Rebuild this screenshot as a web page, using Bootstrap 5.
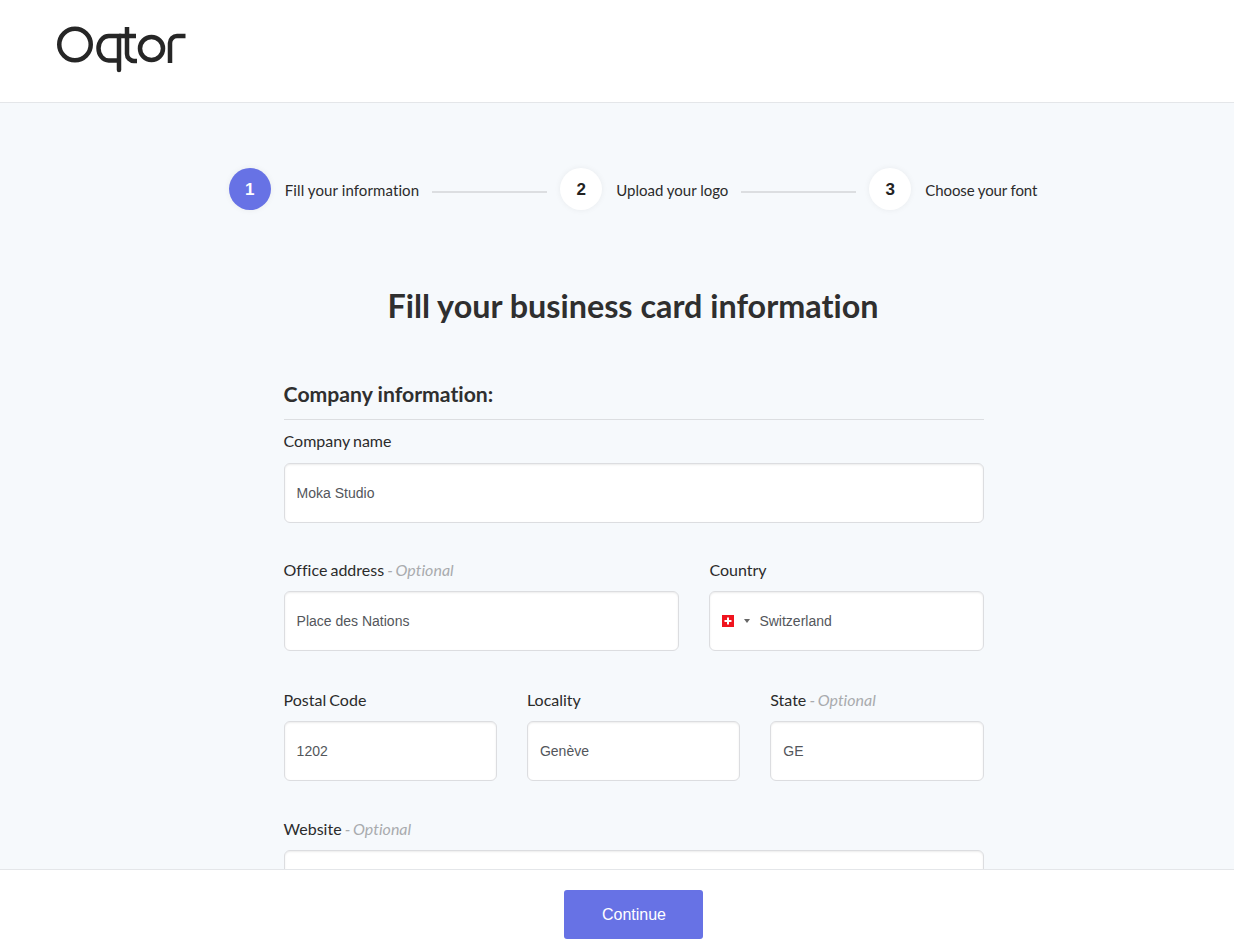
<!DOCTYPE html>
<html lang="en">
<head>
    <meta charset="UTF-8">
    <meta name="viewport" content="width=device-width, initial-scale=1.0">
    <title>Oqtor</title>
    <link href="https://cdn.jsdelivr.net/npm/bootstrap@5.3.3/dist/css/bootstrap.min.css" rel="stylesheet">
    <style>
        html, body { height: 100%; }
        body { font-family: "Lato", sans-serif; font-variant-ligatures: none; color: #2b2b2b; background: #f6f9fc; overflow: hidden; }
        .top-bar { height: 103px; padding-left: 56px; background: #fff; border-bottom: 1px solid #e4e6e9; flex: none; }
        .page-body { flex: 1; min-height: 0; overflow: hidden; padding: 65px 0 0 32px; }
        .bottom-bar { height: 81px; background: #fff; border-top: 1px solid #e4e6e9; flex: none; padding: 20px 0 0 32px; }

        .step-num { width: 42px; height: 42px; border-radius: 50%; background: #fff; font: 700 17px "Liberation Sans", sans-serif; color: #222; box-shadow: 0 0 6px rgba(0, 0, 0, .06); padding-top: 1px; }
        .step-num.is-active { background: #6772e5; color: #fff; }
        .step-text { font-size: 15px; margin-left: 14px; color: #2b2b2b; padding-top: 2px; }
        .step-text.step-first { letter-spacing: .1px; }
        .step-text.step-last { letter-spacing: -.12px; }
        .step-line { width: 115px; height: 2px; background: #dcdee1; margin: 6px 13px 0; }

        .main-title { font-size: 32.350px; font-weight: 700; color: #2f2f2f; margin: 73px 0 0; line-height: 46px; text-align: center; }
        .form-wrap { width: 700px; margin-left: 251.600px; padding-top: 50px; }
        .section-title { font-size: 21.200px; font-weight: 700; line-height: 30px; padding-bottom: 10px; margin: 0 0 10px; border-bottom: 1px solid #dcdee1; color: #2f2f2f; }
        .field-row { --bs-gutter-x: 30px; }
        .field-group { margin-bottom: 37px; }
        .field-group.gap-first { margin-bottom: 36px; }
        .field-group.gap-second { margin-bottom: 38px; }
        .field-label { font-size: 16px; line-height: 22px; margin-bottom: 10px; display: block; color: #2b2b2b; word-spacing: -1px; }
        .gap-first .field-label { margin-bottom: 11px; }
        .field-label em { color: #a9abae; }
        .field-input.form-control { height: 60px; padding: 0 12px; font: 14px "Liberation Sans", sans-serif; color: #53565b; border: 1px solid #dcdde0; border-radius: 6px; background: #fff; box-shadow: inset 0 1px 2px rgba(0, 0, 0, .08); }
        .country-box { height: 60px; padding: 0 12px; font: 14px "Liberation Sans", sans-serif; color: #53565b; border: 1px solid #dcdde0; border-radius: 6px; background: #fff; box-shadow: inset 0 1px 2px rgba(0, 0, 0, .08); }
        .caret-down { width: 0; height: 0; border-left: 3.500px solid transparent; border-right: 3.500px solid transparent; border-top: 4px solid #666; margin: 0 9px 0 10px; }
        .continue-btn.btn { width: 139px; height: 49px; padding: 0 0 0 2px; background: #6772e5; border: 0; border-radius: 3px; color: #fff; font: 16px "Liberation Sans", sans-serif; }
    </style>
</head>
<body class="d-flex flex-column">
    <header class="top-bar d-flex align-items-center">
        <svg width="132" height="52" viewBox="0 0 132 52" fill="none" stroke="#262626" stroke-width="4.500" aria-label="Oqtor">
            <!-- O -->
            <circle cx="19" cy="19.500" r="15.750"/>
            <!-- q, its top line runs on into the t -->
            <path d="M63 45 V11 H52.750 A10.250 12.250 0 0 0 52.750 35.500 H61" stroke-linecap="round"/>
            <!-- t -->
            <path d="M63 11 H80 M71 2 V29 A7 7 0 0 0 78 36 H81"/>
            <!-- o -->
            <circle cx="95.500" cy="23.500" r="11.500"/>
            <!-- r -->
            <path d="M114 38 V18 A7 7 0 0 1 121 11 H129.500"/>
        </svg>
    </header>

    <main class="page-body">
        <div class="d-flex align-items-center justify-content-center">
            <span class="step-num is-active d-flex align-items-center justify-content-center">1</span>
            <span class="step-text step-first">Fill your information</span>
            <span class="step-line"></span>
            <span class="step-num d-flex align-items-center justify-content-center">2</span>
            <span class="step-text">Upload your logo</span>
            <span class="step-line"></span>
            <span class="step-num d-flex align-items-center justify-content-center">3</span>
            <span class="step-text step-last">Choose your font</span>
        </div>

        <h1 class="main-title">Fill your business card information</h1>

        <form class="form-wrap">
            <h2 class="section-title">Company information:</h2>

            <div class="field-group gap-first">
                <label class="field-label" for="companyName">Company name</label>
                <input class="form-control field-input" id="companyName" type="text" value="Moka Studio">
            </div>

            <div class="row field-row">
                <div class="col-7 field-group gap-second">
                    <label class="field-label" for="address">Office address <em>- Optional</em></label>
                    <input class="form-control field-input" id="address" type="text" value="Place des Nations">
                </div>
                <div class="col-5 field-group gap-second">
                    <span class="field-label">Country</span>
                    <div class="country-box d-flex align-items-center">
                        <svg width="12" height="12" viewBox="0 0 12 12" aria-hidden="true">
                            <rect width="12" height="12" fill="#f0141e"/>
                            <path d="M5 2.500h2V5h2.500v2H7v2.500H5V7H2.500V5H5z" fill="#fff"/>
                        </svg>
                        <span class="caret-down"></span>
                        <span>Switzerland</span>
                    </div>
                </div>
            </div>

            <div class="row field-row">
                <div class="col-4 field-group">
                    <label class="field-label" for="postal">Postal Code</label>
                    <input class="form-control field-input" id="postal" type="text" value="1202">
                </div>
                <div class="col-4 field-group">
                    <label class="field-label" for="locality">Locality</label>
                    <input class="form-control field-input" id="locality" type="text" value="Genève">
                </div>
                <div class="col-4 field-group">
                    <label class="field-label" for="state">State <em>- Optional</em></label>
                    <input class="form-control field-input" id="state" type="text" value="GE">
                </div>
            </div>

            <div class="field-group">
                <label class="field-label" for="website">Website <em>- Optional</em></label>
                <input class="form-control field-input" id="website" type="text">
            </div>
        </form>
    </main>

    <footer class="bottom-bar text-center">
        <button type="button" class="btn continue-btn">Continue</button>
    </footer>

    <script src="https://cdn.jsdelivr.net/npm/bootstrap@5.3.3/dist/js/bootstrap.bundle.min.js"></script>
</body>
</html>
